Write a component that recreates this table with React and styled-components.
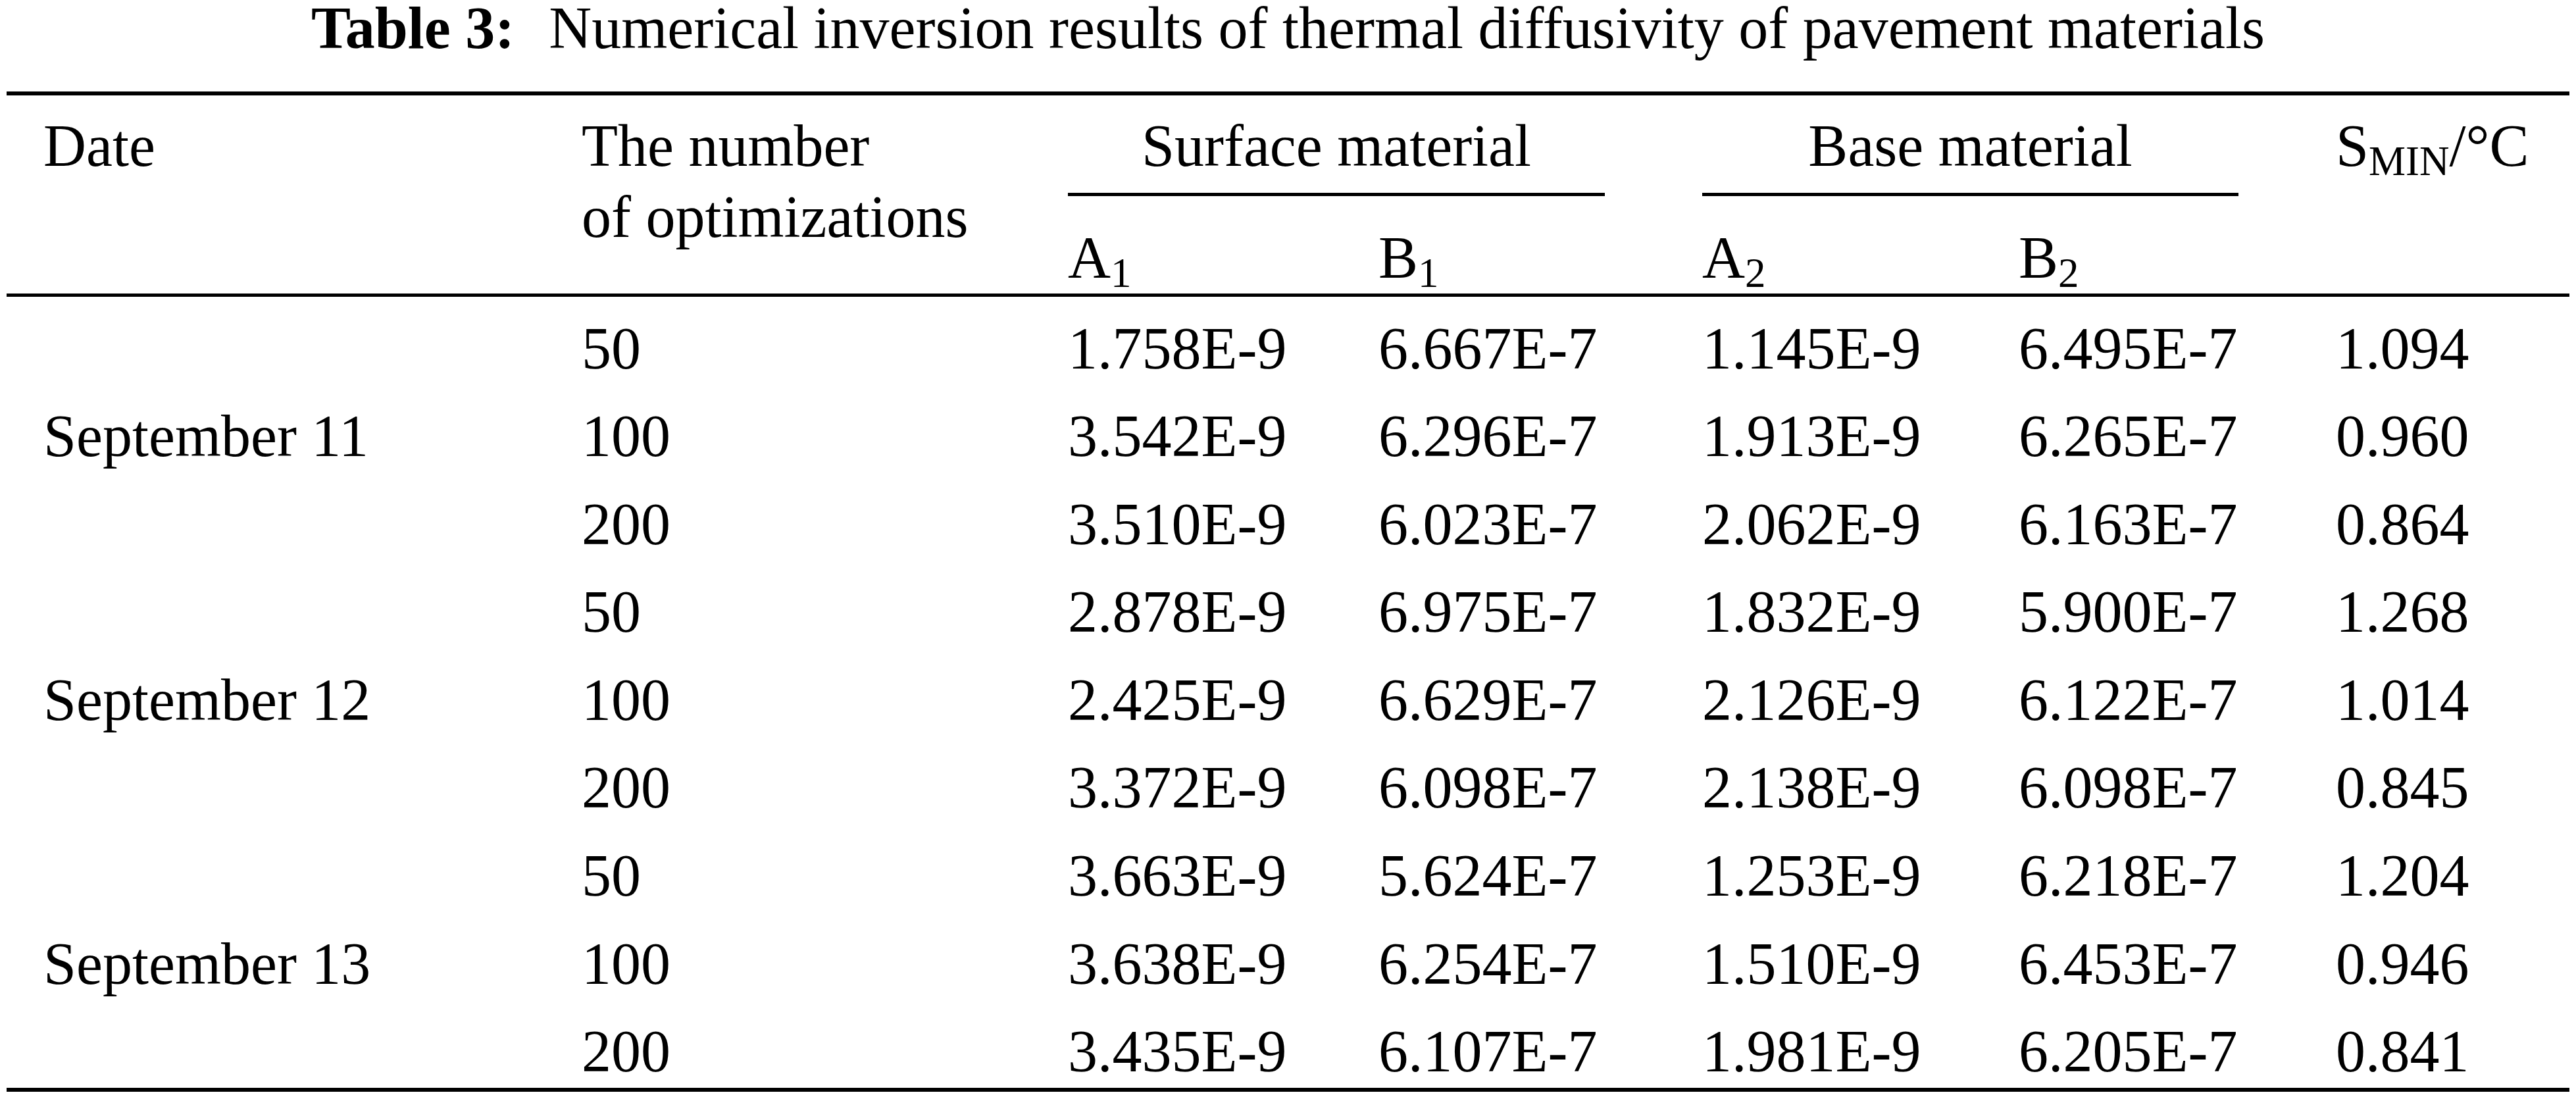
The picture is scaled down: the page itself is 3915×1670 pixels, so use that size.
import React from "react";
import styled, { createGlobalStyle } from "styled-components";

const GlobalStyle = createGlobalStyle`
  html,
  body {
    margin: 0;
    padding: 0;
    background: #fff;
  }
  body {
    font-family: "Liberation Serif", "Times New Roman", serif;
    color: #000;
  }
`;

const DATA_COLUMNS = "739px 472px 492px 481px 482px 411px";

const Page = styled.div`
  width: 3915px;
  height: 1670px;
  display: flex;
  flex-direction: column;
  align-items: center;
  font-size: 90px;
`;

const Caption = styled.div`
  height: 86px;
  line-height: 86px;
  margin-bottom: 53px;
  white-space: nowrap;
`;

const CaptionLabel = styled.span`
  font-weight: bold;
  margin-right: 52px;
`;

const Table = styled.div`
  width: 3895px;
  border-top: 6px solid #000;
  border-bottom: 6px solid #000;
`;

const Head = styled.div`
  display: grid;
  grid-template-columns: 818px ${DATA_COLUMNS};
  grid-template-rows: 153px 148px;
  border-bottom: 5px solid #000;
  line-height: 108px;
`;

const HeadCell = styled.div`
  grid-column: ${({ $col }) => $col};
  grid-row: ${({ $row }) => $row};
  padding: ${({ $top }) => $top}px 0 0 56px;
  white-space: nowrap;
`;

const SpanHead = styled.div`
  grid-column: ${({ $col }) => $col};
  grid-row: 1;
  padding: 22.6px 92px 0 56px;
`;

const SpanLabel = styled.div`
  text-align: center;
  padding-bottom: 17.4px;
  border-bottom: 5px solid #000;
  white-space: nowrap;
`;

const Sub = styled.sub`
  font-size: 0.7em;
  line-height: 0;
  vertical-align: -14px;
`;

const Group = styled.div`
  display: grid;
  grid-template-columns: 818px 1fr;
`;

const DateCell = styled.div`
  display: flex;
  align-items: center;
  padding: 23.5px 0 0 56px;
  line-height: 110px;
  white-space: nowrap;
`;

const Row = styled.div`
  display: grid;
  grid-template-columns: ${DATA_COLUMNS};
  height: 133.6px;
`;

const Cell = styled.div`
  padding: 23.5px 0 0 56px;
  line-height: 110px;
  white-space: nowrap;
`;

const groups = [
  {
    date: "September 11",
    rows: [
      ["50", "1.758E-9", "6.667E-7", "1.145E-9", "6.495E-7", "1.094"],
      ["100", "3.542E-9", "6.296E-7", "1.913E-9", "6.265E-7", "0.960"],
      ["200", "3.510E-9", "6.023E-7", "2.062E-9", "6.163E-7", "0.864"],
    ],
  },
  {
    date: "September 12",
    rows: [
      ["50", "2.878E-9", "6.975E-7", "1.832E-9", "5.900E-7", "1.268"],
      ["100", "2.425E-9", "6.629E-7", "2.126E-9", "6.122E-7", "1.014"],
      ["200", "3.372E-9", "6.098E-7", "2.138E-9", "6.098E-7", "0.845"],
    ],
  },
  {
    date: "September 13",
    rows: [
      ["50", "3.663E-9", "5.624E-7", "1.253E-9", "6.218E-7", "1.204"],
      ["100", "3.638E-9", "6.254E-7", "1.510E-9", "6.453E-7", "0.946"],
      ["200", "3.435E-9", "6.107E-7", "1.981E-9", "6.205E-7", "0.841"],
    ],
  },
];

const App = () => {
  return (
    <Page>
      <GlobalStyle />
      <Caption>
        <CaptionLabel>Table 3:</CaptionLabel>
        Numerical inversion results of thermal diffusivity of pavement materials
      </Caption>
      <Table>
        <Head>
          <HeadCell $col={1} $row="1 / 3" $top={22.6}>
            Date
          </HeadCell>
          <HeadCell $col={2} $row="1 / 3" $top={22.6}>
            The number
            <br />
            of optimizations
          </HeadCell>
          <SpanHead $col="3 / 5">
            <SpanLabel>Surface material</SpanLabel>
          </SpanHead>
          <SpanHead $col="5 / 7">
            <SpanLabel>Base material</SpanLabel>
          </SpanHead>
          <HeadCell $col={7} $row="1 / 3" $top={22.6}>
            S<Sub>MIN</Sub>/°C
          </HeadCell>
          <HeadCell $col={3} $row={2} $top={39.6}>
            A<Sub>1</Sub>
          </HeadCell>
          <HeadCell $col={4} $row={2} $top={39.6}>
            B<Sub>1</Sub>
          </HeadCell>
          <HeadCell $col={5} $row={2} $top={39.6}>
            A<Sub>2</Sub>
          </HeadCell>
          <HeadCell $col={6} $row={2} $top={39.6}>
            B<Sub>2</Sub>
          </HeadCell>
        </Head>
        {groups.map((group) => (
          <Group key={group.date}>
            <DateCell>{group.date}</DateCell>
            <div>
              {group.rows.map((row, i) => (
                <Row key={i}>
                  {row.map((value, j) => (
                    <Cell key={j}>{value}</Cell>
                  ))}
                </Row>
              ))}
            </div>
          </Group>
        ))}
      </Table>
    </Page>
  );
};

export default App;
